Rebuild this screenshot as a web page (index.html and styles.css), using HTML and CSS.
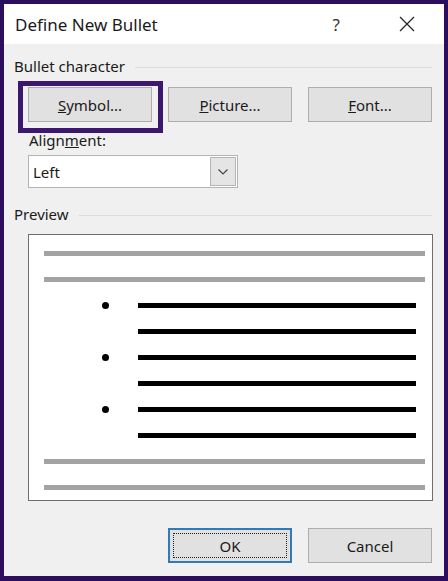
FILE: index.html
```html
<!DOCTYPE html>
<html lang="en">
<head>
    <meta charset="UTF-8">
    <title>Define New Bullet</title>
    <link rel="stylesheet" href="styles.css">
</head>
<body>
    <div class="window">
        <div class="titlebar">
            <span class="title">Define New Bullet</span>
            <span class="help">?</span>
            <svg class="close" width="16" height="16" viewBox="0 0 16 16">
                <path d="M1 1 L15 15 M15 1 L1 15" stroke="#222" stroke-width="1.2" fill="none"/>
            </svg>
        </div>

        <div class="content">
            <div class="group-label">
                <span>Bullet character</span>
                <div class="rule"></div>
            </div>

            <div class="button-row">
                <div class="highlight"></div>
                <button class="btn"><u>S</u>ymbol...</button>
                <button class="btn"><u>P</u>icture...</button>
                <button class="btn"><u>F</u>ont...</button>
            </div>

            <div class="field-label">Align<u>m</u>ent:</div>
            <div class="select">
                <span>Left</span>
                <div class="select-arrow">
                    <svg width="12" height="8" viewBox="0 0 12 8">
                        <path d="M1.5 1.5 L6 6 L10.5 1.5" stroke="#444" stroke-width="1.2" fill="none"/>
                    </svg>
                </div>
            </div>

            <div class="group-label preview-label">
                <span>Preview</span>
                <div class="rule"></div>
            </div>

            <div class="preview">
                <div class="row"><div class="bar gray"></div></div>
                <div class="row"><div class="bar gray"></div></div>
                <div class="row"><div class="dot"></div><div class="bar black"></div></div>
                <div class="row"><div class="bar black indent"></div></div>
                <div class="row"><div class="dot"></div><div class="bar black"></div></div>
                <div class="row"><div class="bar black indent"></div></div>
                <div class="row"><div class="dot"></div><div class="bar black"></div></div>
                <div class="row"><div class="bar black indent"></div></div>
                <div class="row"><div class="bar gray"></div></div>
                <div class="row"><div class="bar gray"></div></div>
            </div>

            <div class="actions">
                <button class="btn default"><span class="focus">OK</span></button>
                <button class="btn">Cancel</button>
            </div>
        </div>
    </div>
</body>
</html>
```

FILE: styles.css
```css
body {
    margin: 0;
    font-family: "Segoe UI", "Noto Sans", Arial, sans-serif;
    color: #1a1a1a;
}
.window {
    width: 448px;
    height: 581px;
    box-sizing: border-box;
    border: 4px solid #2d0d5e;
    border-bottom-width: 5px;
    background-color: #f0f0f0;
}
.titlebar {
    height: 40px;
    background-color: white;
    display: flex;
    align-items: center;
    padding-left: 11px;
    font-size: 17px;
}
.title {
    flex: 1;
}
.help {
    color: #333;
    margin-right: 59px;
}
.close {
    margin-right: 29px;
}
.content {
    padding: 0 12px 0 10px;
    font-size: 15px;
}
.group-label {
    display: flex;
    align-items: center;
    height: 20px;
    margin-top: 12px;
}
.group-label .rule {
    flex: 1;
    height: 1px;
    background-color: #dcdcdc;
    margin-left: 10px;
    margin-top: 2px;
}
.button-row {
    position: relative;
    display: flex;
    gap: 16px;
    margin-top: 11px;
    padding-left: 14px;
}
.highlight {
    position: absolute;
    left: 4px;
    top: -6px;
    width: 145px;
    height: 52px;
    box-sizing: border-box;
    border: 5px solid #3b176f;
}
.btn {
    width: 124px;
    height: 35px;
    box-sizing: border-box;
    background-color: #e1e1e1;
    border: 1px solid #adadad;
    font-family: inherit;
    font-size: 15px;
    color: #1a1a1a;
    padding: 0;
}
.field-label {
    margin-top: 8px;
    padding-left: 15px;
    height: 20px;
    line-height: 20px;
}
.select {
    margin-top: 5px;
    margin-left: 14px;
    width: 210px;
    height: 33px;
    box-sizing: border-box;
    border: 1px solid #b4b4b4;
    background-color: white;
    display: flex;
    align-items: center;
    justify-content: space-between;
    padding: 1px 1px 1px 4px;
}
.select-arrow {
    width: 26px;
    height: 29px;
    box-sizing: border-box;
    background-color: #e5e5e5;
    border: 1px solid #b4b4b4;
    display: flex;
    align-items: center;
    justify-content: center;
}
.preview-label {
    margin-top: 16px;
}
.preview {
    margin-top: 10px;
    margin-left: 14px;
    width: 405px;
    height: 267px;
    box-sizing: border-box;
    border: 1px solid #6e6e6e;
    background-color: white;
    padding-top: 16px;
    display: flex;
    flex-direction: column;
    gap: 21px;
}
.row {
    display: flex;
    align-items: center;
    height: 5px;
}
.bar {
    height: 5px;
}
.bar.gray {
    background-color: #a3a3a3;
    width: 381px;
    margin-left: 15px;
}
.bar.black {
    background-color: #000;
    width: 278px;
}
.bar.indent {
    margin-left: 109px;
}
.dot {
    width: 7px;
    height: 7px;
    border-radius: 50%;
    background-color: #000;
    margin-left: 73px;
    margin-right: 29px;
}
.actions {
    display: flex;
    justify-content: flex-end;
    gap: 16px;
    margin-top: 27px;
}
.btn.default {
    border: 2px solid #2f7bb8;
    padding: 3px;
}
.focus {
    display: flex;
    align-items: center;
    justify-content: center;
    height: 100%;
    box-sizing: border-box;
    border: 1px dotted #222;
}
```
